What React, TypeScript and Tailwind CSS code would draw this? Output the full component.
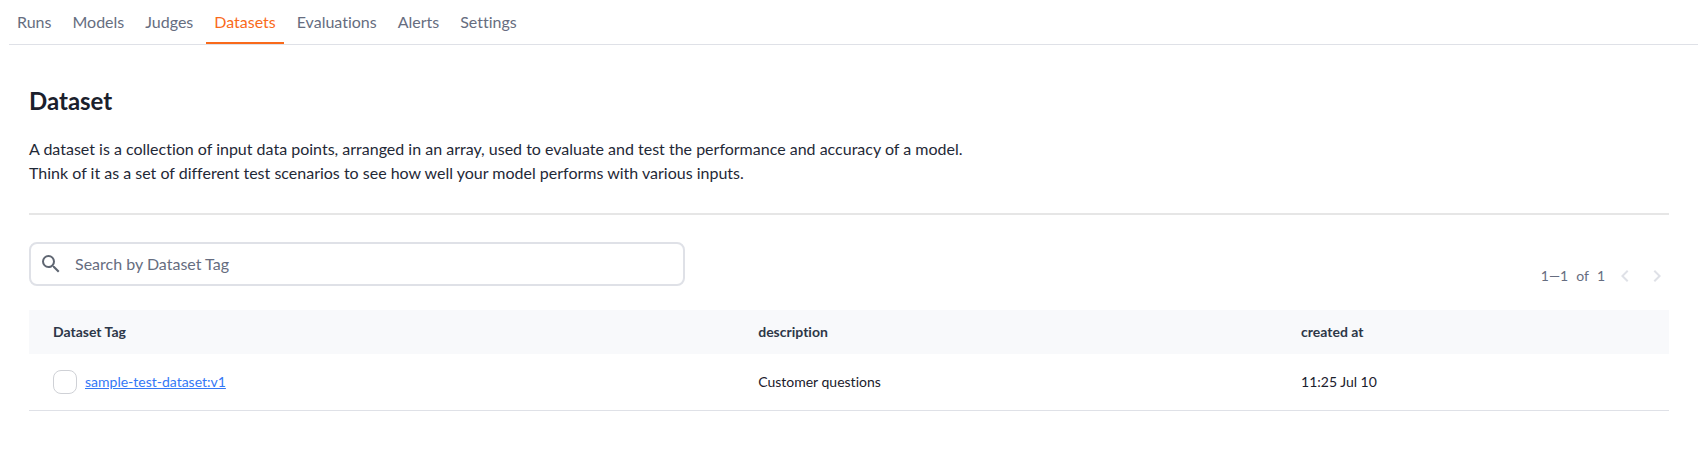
import { useState } from "react";

const tabs = ["Runs", "Models", "Judges", "Datasets", "Evaluations", "Alerts", "Settings"];

const rows = [
  { tag: "sample-test-dataset:v1", description: "Customer questions", createdAt: "11:25 Jul 10" },
];

function TabBar() {
  return (
    <nav className="ml-[9px] flex gap-[5px] border-b border-[#dfe1e7]">
      {tabs.map((tab) => (
        <a
          key={tab}
          href={`#${tab.toLowerCase()}`}
          aria-current={tab === "Datasets" ? "page" : undefined}
          className={
            tab === "Datasets"
              ? "border-b-2 border-[#f96a1b] px-2 pt-2.5 pb-2 text-base text-[#f96a1b]"
              : "border-b-2 border-transparent px-2 pt-2.5 pb-2 text-base text-[#666d80]"
          }
        >
          {tab}
        </a>
      ))}
    </nav>
  );
}

function SearchBox() {
  const [query, setQuery] = useState("");
  return (
    <label className="flex h-11 w-2/5 items-center gap-3 rounded-lg border-2 border-[#dfe1e7] pl-2">
      <svg viewBox="0 0 24 24" className="size-6 shrink-0 fill-[#5f6672]" aria-hidden="true">
        <path d="M15.5 14h-.79l-.28-.27A6.471 6.471 0 0 0 16 9.5 6.5 6.5 0 1 0 9.5 16c1.61 0 3.09-.59 4.23-1.57l.27.28v.79l5 4.99L20.49 19l-4.99-5zm-6 0C7.01 14 5 11.99 5 9.5S7.01 5 9.5 5 14 7.01 14 9.5 11.99 14 9.5 14z" />
      </svg>
      <input
        type="search"
        aria-label="Search by Dataset Tag"
        placeholder="Search by Dataset Tag"
        value={query}
        onChange={(e) => setQuery(e.target.value)}
        className="min-w-0 flex-1 text-base text-[#1f2733] outline-none placeholder:text-[#666d80]"
      />
    </label>
  );
}

function Pagination() {
  return (
    <div className="mt-[22px] flex items-center gap-2 text-sm text-[#666d80]">
      <span>1—1</span>
      <span>of</span>
      <span>1</span>
      <button type="button" disabled aria-label="Previous page">
        <svg viewBox="0 0 24 24" className="size-6 fill-[#dfe1e7]" aria-hidden="true">
          <path d="M15.41 7.41 14 6l-6 6 6 6 1.41-1.41L10.83 12z" />
        </svg>
      </button>
      <button type="button" disabled aria-label="Next page">
        <svg viewBox="0 0 24 24" className="size-6 fill-[#dfe1e7]" aria-hidden="true">
          <path d="M10 6 8.59 7.41 13.17 12l-4.58 4.59L10 18l6-6z" />
        </svg>
      </button>
    </div>
  );
}

function DatasetTable() {
  return (
    <table className="mt-[22px] w-full table-fixed text-left text-sm text-[#1a202c]">
      <thead className="bg-[#f8f9fb] text-[#2d3748]">
        <tr className="h-11">
          <th className="w-[43%] px-6 font-bold">Dataset Tag</th>
          <th className="w-[33.1%] px-6 font-bold">description</th>
          <th className="px-6 font-bold">created at</th>
        </tr>
      </thead>
      <tbody>
        {rows.map((row) => (
          <tr key={row.tag} className="h-14 border-b border-[#dfe1e7]">
            <td className="px-6">
              <div className="flex items-center gap-2">
                <input
                  type="checkbox"
                  aria-label={`Select ${row.tag}`}
                  className="size-6 appearance-none rounded-lg border border-[#cfd1d6] checked:bg-[#f96a1b]"
                />
                <a href={`#${row.tag}`} className="text-[#3478f6] underline">
                  {row.tag}
                </a>
              </div>
            </td>
            <td className="px-6">{row.description}</td>
            <td className="px-6">{row.createdAt}</td>
          </tr>
        ))}
      </tbody>
    </table>
  );
}

export default function App() {
  return (
    <div className="bg-white font-['Lato',sans-serif] text-[#1a202c] [font-variant-ligatures:no-common-ligatures]">
      <TabBar />
      <main className="px-[29px] pt-10">
        <h1 className="text-2xl font-bold">Dataset</h1>
        <p className="mt-5 text-base text-[#1f2937]">
          A dataset is a collection of input data points, arranged in an array, used to evaluate and
          test the performance and accuracy of a model.
          <br />
          Think of it as a set of different test scenarios to see how well your model performs with
          various inputs.
        </p>
        <hr className="mt-7 mb-[27px] border-t-2 border-[#e6e6e6]" />
        <div className="flex items-start justify-between">
          <SearchBox />
          <Pagination />
        </div>
        <DatasetTable />
      </main>
    </div>
  );
}
